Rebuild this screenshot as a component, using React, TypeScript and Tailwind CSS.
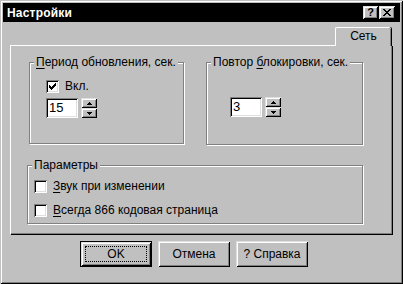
import React from "react";

const raised =
  "shadow-[inset_1px_1px_#dfdfdf,inset_-1px_-1px_#000,inset_2px_2px_#fff,inset_-2px_-2px_#808080]";
const sunken =
  "shadow-[inset_1px_1px_#808080,inset_-1px_-1px_#fff,inset_2px_2px_#000,inset_-2px_-2px_#dfdfdf]";

const U = ({ children }: { children: React.ReactNode }) => <span className="underline underline-offset-2">{children}</span>;

const GroupBox = ({ label, className, children }: { label: React.ReactNode; className: string; children?: React.ReactNode }) => (
  <div className={`relative border border-[#808080] shadow-[inset_1px_1px_#fff,1px_1px_#fff] ${className}`}>
    <span className="absolute -top-[8px] left-[4px] bg-[#c0c0c0] px-[2px] leading-[14px]">{label}</span>
    {children}
  </div>
);

const CheckBox = ({ checked, label }: { checked?: boolean; label: React.ReactNode }) => (
  <div className="flex items-center gap-[6px]">
    <div className={`w-[13px] h-[13px] bg-white flex items-center justify-center ${sunken}`}>
      {checked && (
        <svg width="7" height="7" viewBox="0 0 7 7">
          <path d="M0 2h1v1h1v1h1V3h1V2h1V1h1V0h1v3H6v1H5v1H4v1H3v1H2V6H1V5H0z" fill="#000" />
        </svg>
      )}
    </div>
    <span className="leading-[14px]">{label}</span>
  </div>
);

const Spin = ({ value }: { value: string }) => (
  <div className="flex items-start gap-[3px]">
    <div className={`w-[32px] h-[20px] bg-white text-black pl-[3px] pt-[2px] text-[13px] leading-[16px] ${sunken}`}>{value}</div>
    <div className="flex flex-col w-[16px]">
      <div className={`h-[10px] bg-[#c0c0c0] flex items-center justify-center ${raised}`}>
        <svg width="5" height="3" viewBox="0 0 5 3"><path d="M2 0h1v1h1v1h1v1H0V2h1V1h1z" fill="#000" /></svg>
      </div>
      <div className={`h-[10px] bg-[#c0c0c0] flex items-center justify-center ${raised}`}>
        <svg width="5" height="3" viewBox="0 0 5 3"><path d="M0 0h5v1H4v1H3v1H2V2H1V1H0z" fill="#000" /></svg>
      </div>
    </div>
  </div>
);

const Button = ({ children, def }: { children: React.ReactNode; def?: boolean }) =>
  def ? (
    <div className="w-[72px] h-[26px] border border-black">
      <div className={`w-full h-full p-[4px] ${raised}`}>
        <div className="w-full h-full border border-dotted border-black flex items-center justify-center leading-none">{children}</div>
      </div>
    </div>
  ) : (
    <div className={`w-[72px] h-[26px] flex items-center justify-center ${raised}`}>{children}</div>
  );

export default function App() {
  return (
    <div
      className={`w-[403px] h-[284px] bg-[#c0c0c0] p-[3px] text-black text-[12px] shadow-[inset_1px_1px_#c0c0c0,inset_-1px_-1px_#000,inset_2px_2px_#fff,inset_-2px_-2px_#808080]`}
      style={{ fontFamily: '"Liberation Sans", Arial, sans-serif' }}
    >
      <div className="h-[19px] bg-black flex items-center justify-between pl-[4px] pr-[5px]">
        <span className="text-white font-bold text-[12px] tracking-[0.2px]">Настройки</span>
        <div className="flex gap-[1px]">
          <div className={`w-[15px] h-[13px] bg-[#c0c0c0] text-black flex items-center justify-center font-bold text-[11px] leading-none ${raised}`}>?</div>
          <div className={`w-[16px] h-[13px] bg-[#c0c0c0] flex items-center justify-center ${raised}`}>
            <svg width="8" height="7" viewBox="0 0 8 7">
              <path d="M0 0h2v1h1v1h2V1h1V0h2v1H7v1H6v1H5v1h1v1h1v1h1v1H6V6H5V5H3v1H2v1H0V6h1V5h1V4h1V3H2V2H1V1H0z" fill="#000" />
            </svg>
          </div>
        </div>
      </div>

      <div className="mt-[5px] ml-[7px] w-[382px]">
        <div className="flex justify-end pr-[1px]">
          <div className="relative z-10 -mb-[1px] w-[56px] h-[19px] bg-[#c0c0c0] border-t border-l border-white rounded-tl-[2px] rounded-tr-[2px] shadow-[inset_-1px_0_#808080,1px_0_#000] flex items-center justify-center pb-[2px]">
            Сеть
          </div>
        </div>
        <div className="h-[189px] border-t border-l border-white shadow-[inset_-1px_-1px_#808080,1px_1px_#000]">
          <div className="flex pt-[16px]">
            <GroupBox label={<><U>П</U>ериод обновления, сек.</>} className="ml-[18px] w-[155px] h-[82px] pl-[16px] pt-[16px]">
              <CheckBox checked label="Вкл." />
              <div className="mt-[5px]">
                <Spin value="15" />
              </div>
            </GroupBox>
            <GroupBox label={<>Повтор <U>б</U>локировки, сек.</>} className="ml-[22px] w-[157px] h-[83px] pl-[23px] pt-[34px]">
              <Spin value="3" />
            </GroupBox>
          </div>
          <GroupBox label="Параметры" className="mt-[20px] ml-[16px] w-[336px] h-[59px] pl-[6px] pt-[13px]">
            <div className="flex flex-col gap-[10px]">
              <CheckBox label={<><U>З</U>вук при изменении</>} />
              <CheckBox label={<><U>В</U>сегда 866 кодовая страница</>} />
            </div>
          </GroupBox>
        </div>
      </div>

      <div className="mt-[7px] ml-[77px] flex gap-[6px]">
        <Button def>OK</Button>
        <Button>Отмена</Button>
        <Button>? Справка</Button>
      </div>
    </div>
  );
}
